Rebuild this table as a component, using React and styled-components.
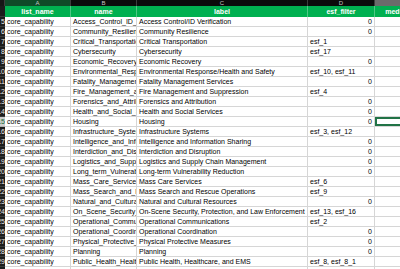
import React from 'react';
import styled, { createGlobalStyle } from 'styled-components';

const GlobalStyle = createGlobalStyle`
  html, body {
    margin: 0;
    padding: 0;
    background: #ffffff;
    overflow: hidden;
  }
  body {
    font-family: "Liberation Sans", Arial, sans-serif;
  }
`;

const Sheet = styled.div`
  width: 400px;
  height: 269px;
  overflow: hidden;
  display: grid;
  grid-template-columns: 5px 66px 66px 171px 67px 60px;
  grid-template-rows: 6px 11px;
  grid-auto-rows: 10px;
  font-size: 7px;
  color: #000;
`;

const letterBg = {
  corner: '#161616',
  dark: '#0b0b0b',
  green: '#0f4a28',
  gray: '#6b6b6b',
};

const ColLetter = styled.div`
  background: ${(p) => letterBg[p.$tone]};
  color: ${(p) => (p.$tone === 'gray' ? '#f0f0f0' : '#c4c4c4')};
  border-right: 1px solid #3c3c3c;
  font-size: 6px;
  line-height: 6px;
  text-align: center;
  overflow: hidden;
`;

const HeadCell = styled.div`
  background: #00b050;
  color: #ffffff;
  font-weight: 700;
  line-height: 11px;
  text-align: center;
  white-space: nowrap;
  overflow: hidden;
  border-right: 1px solid rgba(255, 255, 255, 0.3);
`;

const HeadCorner = styled.div`
  background: #1c1c1c;
  border-bottom: 1px solid #3a3a3a;
`;

const RowNum = styled.div`
  background: ${(p) => (p.$selected ? '#cdcdcd' : '#1c1c1c')};
  color: ${(p) => (p.$selected ? '#146b38' : '#e8e8e8')};
  border-bottom: 1px solid ${(p) => (p.$selected ? '#b0b0b0' : '#3a3a3a')};
  font-size: 7px;
  line-height: 9px;
  display: flex;
  justify-content: flex-end;
  overflow: hidden;
  white-space: nowrap;
`;

const Cell = styled.div`
  box-sizing: border-box;
  border-right: 1px solid #d6d6d6;
  border-bottom: 1px solid #d6d6d6;
  padding: 0 2px;
  line-height: 9px;
  white-space: nowrap;
  overflow: hidden;
  text-align: ${(p) => (p.$align === 'right' ? 'right' : 'left')};
  box-shadow: ${(p) => (p.$active ? 'inset 0 0 0 2px #217346' : 'none')};
`;

const rows = [
  ['Access_Control_ID_Verification', 'Access Control/ID Verification', null],
  ['Community_Resilience', 'Community Resilience', null],
  ['Critical_Transportation', 'Critical Transportation', 'esf_1'],
  ['Cybersecurity', 'Cybersecurity', 'esf_17'],
  ['Economic_Recovery', 'Economic Recovery', null],
  ['Environmental_Response_Health_and_Safety', 'Environmental Response/Health and Safety', 'esf_10, esf_11'],
  ['Fatality_Management_Services', 'Fatality Management Services', null],
  ['Fire_Management_and_Suppression', 'Fire Management and Suppression', 'esf_4'],
  ['Forensics_and_Attribution', 'Forensics and Attribution', null],
  ['Health_and_Social_Services', 'Health and Social Services', null],
  ['Housing', 'Housing', null],
  ['Infrastructure_Systems', 'Infrastructure Systems', 'esf_3, esf_12'],
  ['Intelligence_and_Information_Sharing', 'Intelligence and Information Sharing', null],
  ['Interdiction_and_Disruption', 'Interdiction and Disruption', null],
  ['Logistics_and_Supply_Chain_Management', 'Logistics and Supply Chain Management', null],
  ['Long_term_Vulnerability_Reduction', 'Long-term Vulnerability Reduction', null],
  ['Mass_Care_Services', 'Mass Care Services', 'esf_6'],
  ['Mass_Search_and_Rescue_Operations', 'Mass Search and Rescue Operations', 'esf_9'],
  ['Natural_and_Cultural_Resources', 'Natural and Cultural Resources', null],
  ['On_Scene_Security_Protection_and_Law_Enforcement', 'On-Scene Security, Protection, and Law Enforcement', 'esf_13, esf_16'],
  ['Operational_Communications', 'Operational Communications', 'esf_2'],
  ['Operational_Coordination', 'Operational Coordination', null],
  ['Physical_Protective_Measures', 'Physical Protective Measures', null],
  ['Planning', 'Planning', null],
  ['Public_Health_Healthcare_and_EMS', 'Public Health, Healthcare, and EMS', 'esf_8, esf_8_1'],
  ['Screening_Search_and_Detection', 'Screening, Search, and Detection', null],
];

const letters = [
  ['', 'corner'],
  ['A', 'green'],
  ['B', 'dark'],
  ['C', 'dark'],
  ['D', 'dark'],
  ['E', 'gray'],
];

const headers = ['list_name', 'name', 'label', 'esf_filter', 'media_type'];

const App = () => {
  const selectedRow = 15;
  return (
    <>
      <GlobalStyle />
      <Sheet>
        {letters.map(([l, tone]) => (
          <ColLetter key={tone + l} $tone={tone}>{l}</ColLetter>
        ))}
        <HeadCorner />
        {headers.map((h) => (
          <HeadCell key={h}>{h}</HeadCell>
        ))}
        {rows.map(([name, label, esf], i) => {
          const num = i + 5;
          const sel = num === selectedRow;
          return (
            <React.Fragment key={num}>
              <RowNum $selected={sel}>{num}</RowNum>
              <Cell>core_capability</Cell>
              <Cell>{name}</Cell>
              <Cell>{label}</Cell>
              <Cell $align={esf ? 'left' : 'right'}>{esf || '0'}</Cell>
              <Cell $active={sel} />
            </React.Fragment>
          );
        })}
      </Sheet>
    </>
  );
};

export default App;
